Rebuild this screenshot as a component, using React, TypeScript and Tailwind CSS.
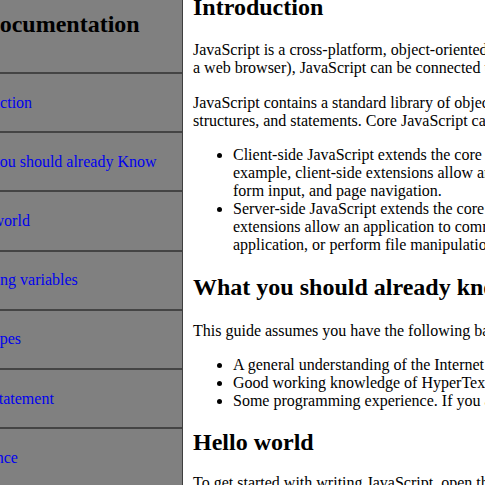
import React from "react";

const navItems = [
  "Introduction",
  "What you should already Know",
  "Hello world",
  "Declaring variables",
  "Data types",
  "while statement",
  "Reference",
];

export default function App() {
  return (
    <div
      className="h-[485px] w-full overflow-hidden bg-white text-black"
      style={{ fontFamily: "'Liberation Serif', 'Times New Roman', serif" }}
    >
      <div className="-ml-[57px] flex h-full">
        <nav className="h-full w-[240px] shrink-0 border-r border-[#3f3f3f] bg-[#808080]">
          <header className="h-[72px] pl-[8px] pt-[11px] text-[24px] font-bold leading-[27px] whitespace-nowrap">
            JS Documentation
          </header>
          <ul>
            {navItems.map((item) => (
              <li key={item} className="border-t-2 border-[#444444]">
                <a
                  href="#"
                  className="block py-[19.6px] pl-[10px] text-[16px] leading-[18px] whitespace-nowrap text-[#0000ee]"
                >
                  {item}
                </a>
              </li>
            ))}
          </ul>
        </nav>
        <main className="-mt-[6px] w-[944px] shrink-0 pl-[10px] text-[16px] leading-[18px]">
          <section>
            <h2 className="mb-[20px] text-[24px] font-bold leading-[27px]">Introduction</h2>
            <p className="mb-[17px]">
              JavaScript is a cross-platform, object-oriented scripting language. It is a small and
              lightweight language. Inside a host environment (for example, a web browser), JavaScript
              can be connected to the objects of its environment to provide programmatic control over
              them.
            </p>
            <p className="mb-[16px]">
              JavaScript contains a standard library of objects, such as Array, Date, and Math, and a
              core set of language elements such as operators, control structures, and statements. Core
              JavaScript can be extended for a variety of purposes by supplementing it with additional
              objects; for example:
            </p>
            <ul className="list-disc pl-[40px]">
              <li>
                Client-side JavaScript extends the core language by supplying objects to control a
                browser and its Document Object Model (DOM). For example, client-side extensions allow an
                application to place elements on an HTML form and respond to user events such as mouse
                clicks, form input, and page navigation.
              </li>
              <li>
                Server-side JavaScript extends the core language by supplying objects relevant to running
                JavaScript on a server. For example, server-side extensions allow an application to
                communicate with a database, provide continuity of information from one invocation to
                another of the application, or perform file manipulations on a server.
              </li>
            </ul>
          </section>
          <section>
            <h2 className="mt-[20px] text-[24px] font-bold leading-[27px]">
              What you should already know
            </h2>
            <p className="mt-[21px]">This guide assumes you have the following basic background:</p>
            <ul className="mt-[16px] list-disc pl-[40px]">
              <li>A general understanding of the Internet and the World Wide Web (WWW).</li>
              <li>Good working knowledge of HyperText Markup Language (HTML).</li>
              <li>
                Some programming experience. If you are new to programming, try one of the tutorials
                linked on the main page about JavaScript.
              </li>
            </ul>
          </section>
          <section>
            <h2 className="mt-[19px] text-[24px] font-bold leading-[27px]">Hello world</h2>
            <p className="mt-[18px]">
              To get started with writing JavaScript, open the Scratchpad and write your first "Hello
              world" JavaScript code:
            </p>
          </section>
        </main>
      </div>
    </div>
  );
}
